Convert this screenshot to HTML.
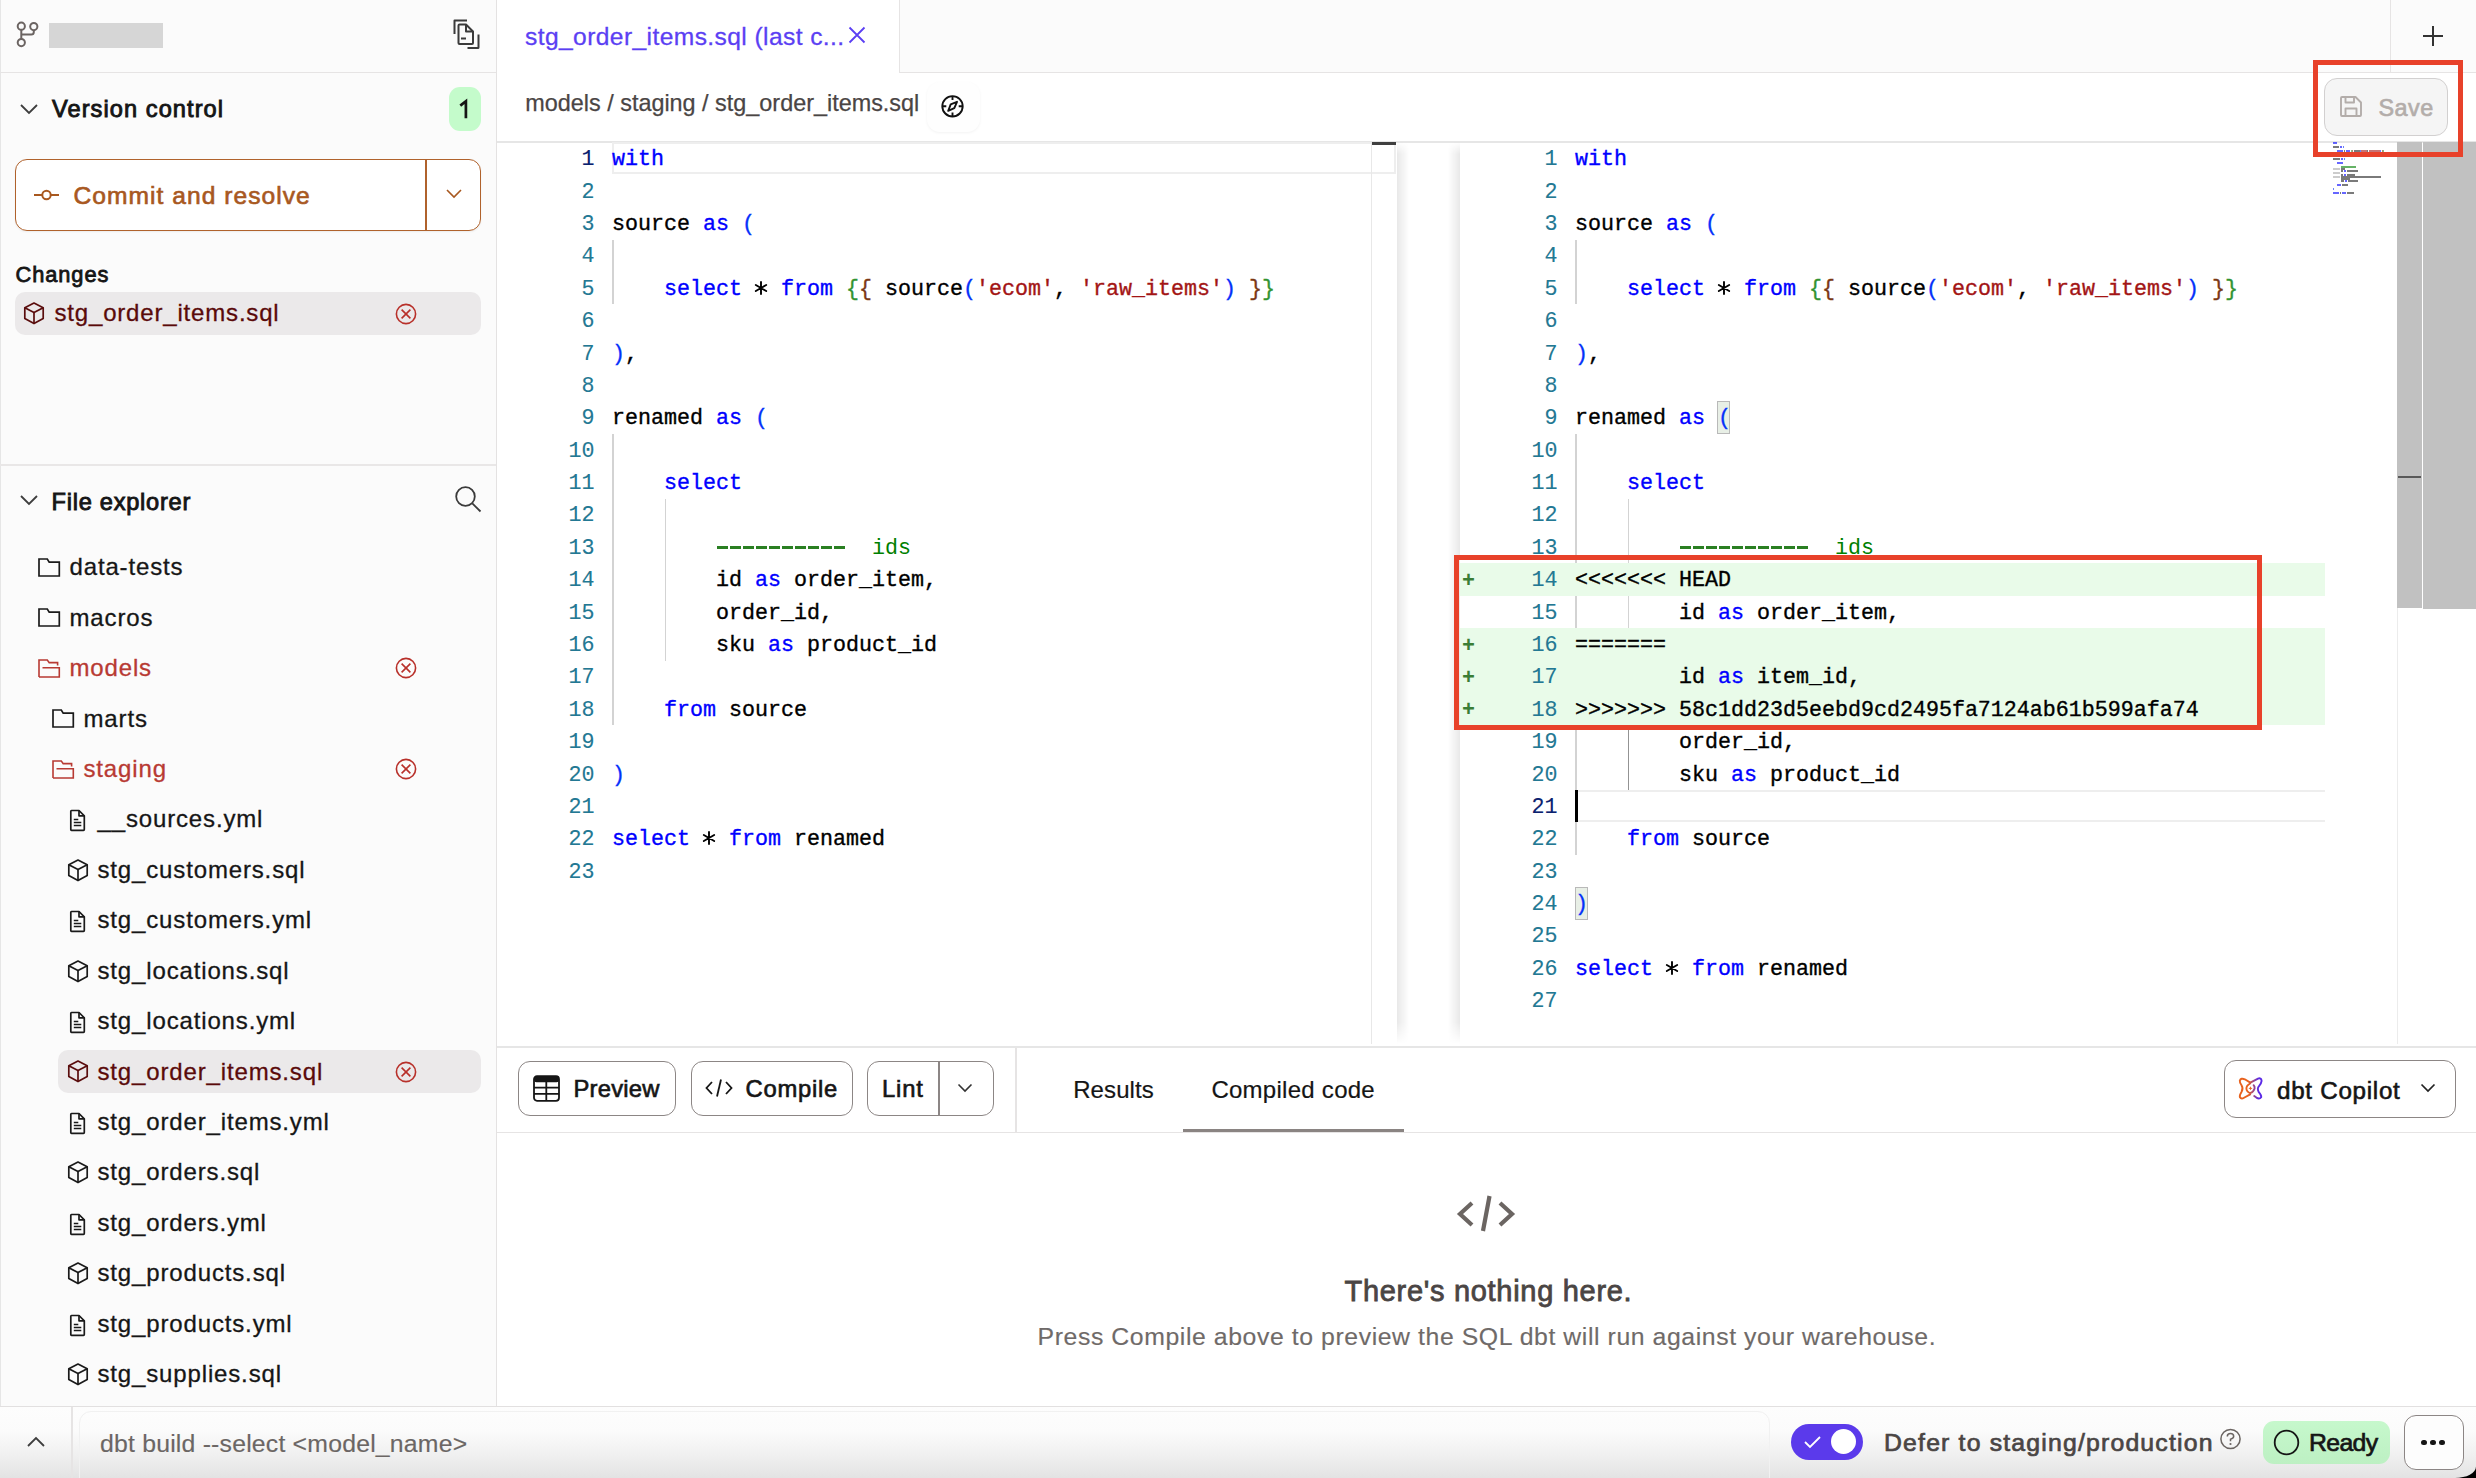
<!DOCTYPE html><html><head><meta charset="utf-8"><style>html,body{margin:0;padding:0;width:2476px;height:1478px;overflow:hidden;background:#fff;position:relative}div{box-sizing:border-box}</style></head><body>
<div style="position:absolute;left:0px;top:0px;width:497px;height:1406px;background:#fbfbfb;border-right:1.5px solid #e4e2e2;border-left:1.5px solid #e6e6e6"></div>
<div style="position:absolute;left:0px;top:71.5px;width:496px;height:1.5px;background:#e6e4e4"></div>
<svg style="position:absolute;left:14px;top:19px;" width="28" height="32" viewBox="0 0 28 32" fill="none"><g stroke="#6b6462" stroke-width="2" fill="none"><circle cx="7.3" cy="7.2" r="3.6"/><circle cx="19.8" cy="7.6" r="3.6"/><circle cx="7.3" cy="23.6" r="3.6"/><path d="M7.3 10.8V20"/><path d="M7.3 15.5H17.3Q19.8 15.5 19.8 13V11.2"/></g></svg>
<div style="position:absolute;left:48.5px;top:22.5px;width:114.5px;height:25.5px;background:#d6d6d6"></div>
<svg style="position:absolute;left:450px;top:16px;" width="34" height="36" viewBox="0 0 34 36" fill="none"><g stroke="#3b3b3b" stroke-width="2" fill="none" stroke-linejoin="round"><path d="M4.5 18V4.5H17"/><path d="M28.5 18.5V31.5Q28.5 32 28 32H17.5"/><path d="M8.5 9.5Q8.5 8.5 9.5 8.5H16L23 15.5V27Q23 28 22 28H9.5Q8.5 28 8.5 27Z"/><path d="M16 8.5V15.5H23"/><path d="M11 22.5H16"/></g></svg>
<svg style="position:absolute;left:19px;top:102px;" width="20" height="16" viewBox="0 0 20 16" fill="none"><path d="M2 3L10 11L18 3" stroke="#3d3d3d" stroke-width="1.8" fill="none"/></svg>
<div style="position:absolute;left:52.00px;top:92.12px;font:400 23.6px 'Liberation Sans', sans-serif;line-height:35px;color:#151515;letter-spacing:1.07px;white-space:pre;-webkit-text-stroke:0.9px #151515">Version control</div>
<div style="position:absolute;left:449px;top:87px;width:32px;height:44px;background:#c4fbcb;border-radius:11px"></div>
<svg style="position:absolute;left:449px;top:87px;" width="32" height="44" viewBox="0 0 32 44" fill="none"><path d="M11.3 18.6L16.9 14.2V31.2" stroke="#151515" stroke-width="2.7" fill="none" stroke-linejoin="miter"/></svg>
<div style="position:absolute;left:15px;top:159px;width:466px;height:72px;background:#fff;border:1.5px solid #b0622c;border-radius:12px;box-shadow:0 1px 2px rgba(0,0,0,0.06)"></div>
<div style="position:absolute;left:425px;top:160px;width:1.5px;height:70px;background:#b0622c"></div>
<svg style="position:absolute;left:32px;top:187px;" width="30" height="16" viewBox="0 0 30 16" fill="none"><g stroke="#a8581f" stroke-width="2" fill="none"><path d="M2 8H10"/><circle cx="14.5" cy="8" r="4.2"/><path d="M19 8H27"/></g></svg>
<div style="position:absolute;left:73.50px;top:176.98px;font:400 24.6px 'Liberation Sans', sans-serif;line-height:37px;color:#a8581f;letter-spacing:1.03px;white-space:pre;-webkit-text-stroke:0.65px #a8581f">Commit and resolve</div>
<svg style="position:absolute;left:444px;top:186px;" width="20" height="16" viewBox="0 0 20 16" fill="none"><path d="M3 4L10 11L17 4" stroke="#a8581f" stroke-width="1.6" fill="none"/></svg>
<div style="position:absolute;left:15.50px;top:257.95px;font:400 21.8px 'Liberation Sans', sans-serif;line-height:33px;color:#151515;letter-spacing:0.93px;white-space:pre;-webkit-text-stroke:0.8px #151515">Changes</div>
<div style="position:absolute;left:15px;top:292px;width:466px;height:43px;background:#ebe9ea;border-radius:10px"></div>
<svg style="position:absolute;left:23px;top:302px;" width="22" height="23" viewBox="0 0 22 23" fill="none"><g stroke="#5a0d0d" stroke-width="1.7" fill="none" stroke-linejoin="round"><path d="M11 1L20.2 5.8V16.6L11 21.6L1.8 16.6V5.8Z"/><path d="M1.8 5.8L11 10.6L20.2 5.8"/><path d="M11 10.6V21.6"/></g></svg>
<div style="position:absolute;left:54.50px;top:295.18px;font:400 24px 'Liberation Sans', sans-serif;line-height:36px;color:#5a0a0a;letter-spacing:0.82px;white-space:pre;-webkit-text-stroke:0.3px #5a0a0a">stg_order_items.sql</div>
<svg style="position:absolute;left:393.5px;top:301.5px;" width="24" height="24" viewBox="0 0 24 24" fill="none"><g stroke="#b8302a" stroke-width="1.6" fill="none"><circle cx="12" cy="12" r="9.6"/><path d="M7.6 7.6L16.4 16.4M16.4 7.6L7.6 16.4"/></g></svg>
<div style="position:absolute;left:0px;top:464px;width:496px;height:2px;background:#e9e7e7"></div>
<svg style="position:absolute;left:19px;top:493px;" width="20" height="16" viewBox="0 0 20 16" fill="none"><path d="M2 3L10 11L18 3" stroke="#3d3d3d" stroke-width="1.8" fill="none"/></svg>
<div style="position:absolute;left:51.50px;top:484.82px;font:400 23.6px 'Liberation Sans', sans-serif;line-height:35px;color:#151515;letter-spacing:0.75px;white-space:pre;-webkit-text-stroke:0.9px #151515">File explorer</div>
<svg style="position:absolute;left:452px;top:483px;" width="32" height="32" viewBox="0 0 32 32" fill="none"><g stroke="#3b3b3b" stroke-width="1.8" fill="none"><circle cx="13.5" cy="13.5" r="9.3"/><path d="M20.3 20.3L28.5 28.5"/></g></svg>
<svg style="position:absolute;left:38px;top:558.0px;" width="23" height="20" viewBox="0 0 23 20" fill="none"><g stroke="#1a1a1a" stroke-width="1.7" fill="none" stroke-linejoin="miter"><path d="M1 1H9.3L11.2 4.1H21.3V18H1Z"/></g></svg>
<div style="position:absolute;left:69.50px;top:549.18px;font:400 24px 'Liberation Sans', sans-serif;line-height:36px;color:#161616;letter-spacing:0.85px;white-space:pre;-webkit-text-stroke:0.3px #161616">data-tests</div>
<svg style="position:absolute;left:38px;top:608.44px;" width="23" height="20" viewBox="0 0 23 20" fill="none"><g stroke="#1a1a1a" stroke-width="1.7" fill="none" stroke-linejoin="miter"><path d="M1 1H9.3L11.2 4.1H21.3V18H1Z"/></g></svg>
<div style="position:absolute;left:69.50px;top:599.62px;font:400 24px 'Liberation Sans', sans-serif;line-height:36px;color:#161616;letter-spacing:0.85px;white-space:pre;-webkit-text-stroke:0.3px #161616">macros</div>
<svg style="position:absolute;left:38px;top:658.88px;" width="23" height="20" viewBox="0 0 23 20" fill="none"><g stroke="#b83a33" stroke-width="1.6" fill="none" stroke-linejoin="miter"><path d="M1 18V1H9.3L11.2 3.6H19.6V6.5"/><path d="M4.5 8.8H21.3V18H1"/></g></svg>
<div style="position:absolute;left:69.50px;top:650.06px;font:400 24px 'Liberation Sans', sans-serif;line-height:36px;color:#b83a33;letter-spacing:0.85px;white-space:pre;-webkit-text-stroke:0.3px #b83a33">models</div>
<svg style="position:absolute;left:393.5px;top:656.38px;" width="24" height="24" viewBox="0 0 24 24" fill="none"><g stroke="#b8302a" stroke-width="1.6" fill="none"><circle cx="12" cy="12" r="9.6"/><path d="M7.6 7.6L16.4 16.4M16.4 7.6L7.6 16.4"/></g></svg>
<svg style="position:absolute;left:52px;top:709.3199999999999px;" width="23" height="20" viewBox="0 0 23 20" fill="none"><g stroke="#1a1a1a" stroke-width="1.7" fill="none" stroke-linejoin="miter"><path d="M1 1H9.3L11.2 4.1H21.3V18H1Z"/></g></svg>
<div style="position:absolute;left:83.50px;top:700.50px;font:400 24px 'Liberation Sans', sans-serif;line-height:36px;color:#161616;letter-spacing:0.85px;white-space:pre;-webkit-text-stroke:0.3px #161616">marts</div>
<svg style="position:absolute;left:52px;top:759.76px;" width="23" height="20" viewBox="0 0 23 20" fill="none"><g stroke="#b83a33" stroke-width="1.6" fill="none" stroke-linejoin="miter"><path d="M1 18V1H9.3L11.2 3.6H19.6V6.5"/><path d="M4.5 8.8H21.3V18H1"/></g></svg>
<div style="position:absolute;left:83.50px;top:750.94px;font:400 24px 'Liberation Sans', sans-serif;line-height:36px;color:#b83a33;letter-spacing:0.85px;white-space:pre;-webkit-text-stroke:0.3px #b83a33">staging</div>
<svg style="position:absolute;left:393.5px;top:757.26px;" width="24" height="24" viewBox="0 0 24 24" fill="none"><g stroke="#b8302a" stroke-width="1.6" fill="none"><circle cx="12" cy="12" r="9.6"/><path d="M7.6 7.6L16.4 16.4M16.4 7.6L7.6 16.4"/></g></svg>
<svg style="position:absolute;left:69px;top:809.2px;" width="17" height="23" viewBox="0 0 17 23" fill="none"><g stroke="#1a1a1a" stroke-width="1.7" fill="none" stroke-linejoin="round"><path d="M1.8 2.2Q1.8 1.5 2.5 1.5H10L15.3 6.8V20.5Q15.3 21.3 14.5 21.3H2.5Q1.8 21.3 1.8 20.5Z"/><path d="M10 1.5V6.8H15.3"/><path d="M4.8 10.5H9.3M4.8 13.5H12.3M4.8 16.5H12.3"/></g></svg>
<div style="position:absolute;left:97.50px;top:801.38px;font:400 24px 'Liberation Sans', sans-serif;line-height:36px;color:#161616;letter-spacing:0.85px;white-space:pre;-webkit-text-stroke:0.3px #161616">__sources.yml</div>
<svg style="position:absolute;left:66.5px;top:858.64px;" width="22" height="23" viewBox="0 0 22 23" fill="none"><g stroke="#1a1a1a" stroke-width="1.7" fill="none" stroke-linejoin="round"><path d="M11 1L20.2 5.8V16.6L11 21.6L1.8 16.6V5.8Z"/><path d="M1.8 5.8L11 10.6L20.2 5.8"/><path d="M11 10.6V21.6"/></g></svg>
<div style="position:absolute;left:97.50px;top:851.82px;font:400 24px 'Liberation Sans', sans-serif;line-height:36px;color:#161616;letter-spacing:0.85px;white-space:pre;-webkit-text-stroke:0.3px #161616">stg_customers.sql</div>
<svg style="position:absolute;left:69px;top:910.0799999999999px;" width="17" height="23" viewBox="0 0 17 23" fill="none"><g stroke="#1a1a1a" stroke-width="1.7" fill="none" stroke-linejoin="round"><path d="M1.8 2.2Q1.8 1.5 2.5 1.5H10L15.3 6.8V20.5Q15.3 21.3 14.5 21.3H2.5Q1.8 21.3 1.8 20.5Z"/><path d="M10 1.5V6.8H15.3"/><path d="M4.8 10.5H9.3M4.8 13.5H12.3M4.8 16.5H12.3"/></g></svg>
<div style="position:absolute;left:97.50px;top:902.26px;font:400 24px 'Liberation Sans', sans-serif;line-height:36px;color:#161616;letter-spacing:0.85px;white-space:pre;-webkit-text-stroke:0.3px #161616">stg_customers.yml</div>
<svg style="position:absolute;left:66.5px;top:959.52px;" width="22" height="23" viewBox="0 0 22 23" fill="none"><g stroke="#1a1a1a" stroke-width="1.7" fill="none" stroke-linejoin="round"><path d="M11 1L20.2 5.8V16.6L11 21.6L1.8 16.6V5.8Z"/><path d="M1.8 5.8L11 10.6L20.2 5.8"/><path d="M11 10.6V21.6"/></g></svg>
<div style="position:absolute;left:97.50px;top:952.70px;font:400 24px 'Liberation Sans', sans-serif;line-height:36px;color:#161616;letter-spacing:0.85px;white-space:pre;-webkit-text-stroke:0.3px #161616">stg_locations.sql</div>
<svg style="position:absolute;left:69px;top:1010.96px;" width="17" height="23" viewBox="0 0 17 23" fill="none"><g stroke="#1a1a1a" stroke-width="1.7" fill="none" stroke-linejoin="round"><path d="M1.8 2.2Q1.8 1.5 2.5 1.5H10L15.3 6.8V20.5Q15.3 21.3 14.5 21.3H2.5Q1.8 21.3 1.8 20.5Z"/><path d="M10 1.5V6.8H15.3"/><path d="M4.8 10.5H9.3M4.8 13.5H12.3M4.8 16.5H12.3"/></g></svg>
<div style="position:absolute;left:97.50px;top:1003.14px;font:400 24px 'Liberation Sans', sans-serif;line-height:36px;color:#161616;letter-spacing:0.85px;white-space:pre;-webkit-text-stroke:0.3px #161616">stg_locations.yml</div>
<div style="position:absolute;left:58px;top:1050.4px;width:423px;height:42.5px;background:#ebe9ea;border-radius:10px"></div>
<svg style="position:absolute;left:66.5px;top:1060.4px;" width="22" height="23" viewBox="0 0 22 23" fill="none"><g stroke="#5a0d0d" stroke-width="1.7" fill="none" stroke-linejoin="round"><path d="M11 1L20.2 5.8V16.6L11 21.6L1.8 16.6V5.8Z"/><path d="M1.8 5.8L11 10.6L20.2 5.8"/><path d="M11 10.6V21.6"/></g></svg>
<div style="position:absolute;left:97.50px;top:1053.58px;font:400 24px 'Liberation Sans', sans-serif;line-height:36px;color:#5a0a0a;letter-spacing:0.85px;white-space:pre;-webkit-text-stroke:0.3px #5a0a0a">stg_order_items.sql</div>
<svg style="position:absolute;left:393.5px;top:1059.9px;" width="24" height="24" viewBox="0 0 24 24" fill="none"><g stroke="#b8302a" stroke-width="1.6" fill="none"><circle cx="12" cy="12" r="9.6"/><path d="M7.6 7.6L16.4 16.4M16.4 7.6L7.6 16.4"/></g></svg>
<svg style="position:absolute;left:69px;top:1111.84px;" width="17" height="23" viewBox="0 0 17 23" fill="none"><g stroke="#1a1a1a" stroke-width="1.7" fill="none" stroke-linejoin="round"><path d="M1.8 2.2Q1.8 1.5 2.5 1.5H10L15.3 6.8V20.5Q15.3 21.3 14.5 21.3H2.5Q1.8 21.3 1.8 20.5Z"/><path d="M10 1.5V6.8H15.3"/><path d="M4.8 10.5H9.3M4.8 13.5H12.3M4.8 16.5H12.3"/></g></svg>
<div style="position:absolute;left:97.50px;top:1104.02px;font:400 24px 'Liberation Sans', sans-serif;line-height:36px;color:#161616;letter-spacing:0.85px;white-space:pre;-webkit-text-stroke:0.3px #161616">stg_order_items.yml</div>
<svg style="position:absolute;left:66.5px;top:1161.28px;" width="22" height="23" viewBox="0 0 22 23" fill="none"><g stroke="#1a1a1a" stroke-width="1.7" fill="none" stroke-linejoin="round"><path d="M11 1L20.2 5.8V16.6L11 21.6L1.8 16.6V5.8Z"/><path d="M1.8 5.8L11 10.6L20.2 5.8"/><path d="M11 10.6V21.6"/></g></svg>
<div style="position:absolute;left:97.50px;top:1154.46px;font:400 24px 'Liberation Sans', sans-serif;line-height:36px;color:#161616;letter-spacing:0.85px;white-space:pre;-webkit-text-stroke:0.3px #161616">stg_orders.sql</div>
<svg style="position:absolute;left:69px;top:1212.72px;" width="17" height="23" viewBox="0 0 17 23" fill="none"><g stroke="#1a1a1a" stroke-width="1.7" fill="none" stroke-linejoin="round"><path d="M1.8 2.2Q1.8 1.5 2.5 1.5H10L15.3 6.8V20.5Q15.3 21.3 14.5 21.3H2.5Q1.8 21.3 1.8 20.5Z"/><path d="M10 1.5V6.8H15.3"/><path d="M4.8 10.5H9.3M4.8 13.5H12.3M4.8 16.5H12.3"/></g></svg>
<div style="position:absolute;left:97.50px;top:1204.90px;font:400 24px 'Liberation Sans', sans-serif;line-height:36px;color:#161616;letter-spacing:0.85px;white-space:pre;-webkit-text-stroke:0.3px #161616">stg_orders.yml</div>
<svg style="position:absolute;left:66.5px;top:1262.1599999999999px;" width="22" height="23" viewBox="0 0 22 23" fill="none"><g stroke="#1a1a1a" stroke-width="1.7" fill="none" stroke-linejoin="round"><path d="M11 1L20.2 5.8V16.6L11 21.6L1.8 16.6V5.8Z"/><path d="M1.8 5.8L11 10.6L20.2 5.8"/><path d="M11 10.6V21.6"/></g></svg>
<div style="position:absolute;left:97.50px;top:1255.34px;font:400 24px 'Liberation Sans', sans-serif;line-height:36px;color:#161616;letter-spacing:0.85px;white-space:pre;-webkit-text-stroke:0.3px #161616">stg_products.sql</div>
<svg style="position:absolute;left:69px;top:1313.6px;" width="17" height="23" viewBox="0 0 17 23" fill="none"><g stroke="#1a1a1a" stroke-width="1.7" fill="none" stroke-linejoin="round"><path d="M1.8 2.2Q1.8 1.5 2.5 1.5H10L15.3 6.8V20.5Q15.3 21.3 14.5 21.3H2.5Q1.8 21.3 1.8 20.5Z"/><path d="M10 1.5V6.8H15.3"/><path d="M4.8 10.5H9.3M4.8 13.5H12.3M4.8 16.5H12.3"/></g></svg>
<div style="position:absolute;left:97.50px;top:1305.78px;font:400 24px 'Liberation Sans', sans-serif;line-height:36px;color:#161616;letter-spacing:0.85px;white-space:pre;-webkit-text-stroke:0.3px #161616">stg_products.yml</div>
<svg style="position:absolute;left:66.5px;top:1363.04px;" width="22" height="23" viewBox="0 0 22 23" fill="none"><g stroke="#1a1a1a" stroke-width="1.7" fill="none" stroke-linejoin="round"><path d="M11 1L20.2 5.8V16.6L11 21.6L1.8 16.6V5.8Z"/><path d="M1.8 5.8L11 10.6L20.2 5.8"/><path d="M11 10.6V21.6"/></g></svg>
<div style="position:absolute;left:97.50px;top:1356.22px;font:400 24px 'Liberation Sans', sans-serif;line-height:36px;color:#161616;letter-spacing:0.85px;white-space:pre;-webkit-text-stroke:0.3px #161616">stg_supplies.sql</div>
<div style="position:absolute;left:497px;top:0px;width:1979px;height:73px;background:#fbfbfb;border-bottom:1.5px solid #e6e4e4"></div>
<div style="position:absolute;left:497px;top:0px;width:403px;height:71.5px;background:#fff;border-right:1.5px solid #e6e4e4"></div>
<div style="position:absolute;left:497px;top:71.5px;width:401.5px;height:1.5px;background:#fff"></div>
<div style="position:absolute;left:525.00px;top:17.78px;font:400 24.6px 'Liberation Sans', sans-serif;line-height:37px;color:#5b3ff3;letter-spacing:0.4px;white-space:pre;-webkit-text-stroke:0.3px #5b3ff3">stg_order_items.sql (last c...</div>
<svg style="position:absolute;left:846px;top:24px;" width="22" height="22" viewBox="0 0 22 22" fill="none"><path d="M3.5 3.5L18.5 18.5M18.5 3.5L3.5 18.5" stroke="#5b3ff3" stroke-width="1.8"/></svg>
<div style="position:absolute;left:2389.5px;top:0px;width:1.5px;height:72px;background:#e6e4e4"></div>
<svg style="position:absolute;left:2421px;top:24px;" width="24" height="24" viewBox="0 0 24 24" fill="none"><path d="M12 2V22M2 12H22" stroke="#333" stroke-width="2"/></svg>
<div style="position:absolute;left:525.30px;top:85.89px;font:400 23.4px 'Liberation Sans', sans-serif;line-height:35px;color:#4a4544;letter-spacing:0px;white-space:pre;-webkit-text-stroke:0.25px #4a4544">models / staging / stg_order_items.sql</div>
<div style="position:absolute;left:927px;top:82px;width:53px;height:50px;border-radius:13px;box-shadow:0 1px 3px rgba(0,0,0,0.05);background:#fefefe"></div>
<svg style="position:absolute;left:940px;top:94px;" width="26" height="26" viewBox="0 0 26 26" fill="none"><g stroke="#111" stroke-width="1.9" fill="none"><circle cx="12.5" cy="12.3" r="10.2"/><path d="M12.5 2V6M12.5 18.6V22.6M2.3 12.3H6.3M18.7 12.3H22.7"/><path d="M17 7.8L14.3 14.2L8.2 16.8L10.7 10.3Z" stroke-linejoin="round"/></g></svg>
<div style="position:absolute;left:2324px;top:78px;width:124px;height:58px;background:#f5f5f5;border:1.5px solid #d2d0d0;border-radius:13px"></div>
<svg style="position:absolute;left:2338px;top:94px;" width="26" height="26" viewBox="0 0 26 26" fill="none"><g stroke="#b3adaa" stroke-width="1.9" fill="none" stroke-linejoin="round"><path d="M3 4Q3 3 4 3H17.5L23 8.5V21Q23 22 22 22H4Q3 22 3 21Z"/><path d="M7.5 3V8.5H16V3"/><path d="M7.5 22V14.5H18.5V22"/></g></svg>
<div style="position:absolute;left:2378.50px;top:91.39px;font:400 23.4px 'Liberation Sans', sans-serif;line-height:35px;color:#b3adaa;letter-spacing:0.5px;white-space:pre;-webkit-text-stroke:0.65px #b3adaa">Save</div>
<div style="position:absolute;left:497px;top:141px;width:1979px;height:1.5px;background:#e6e6e6"></div>
<div style="position:absolute;left:611.5px;top:142px;width:784.5px;height:32.4px;border:2.6px solid #eeeeee"></div>
<div style="position:absolute;left:1371px;top:142px;width:1.2px;height:902px;background:#e8e8e8"></div>
<div style="position:absolute;left:1372px;top:142px;width:24px;height:3px;background:#3f3f3f"></div>
<div style="position:absolute;left:612.3px;top:239.64000000000001px;width:1.3px;height:64.76px;background:#d3d3d3"></div>
<div style="position:absolute;left:612.3px;top:433.92px;width:1.3px;height:291.42px;background:#d3d3d3"></div>
<div style="position:absolute;left:664.8px;top:498.68px;width:1.3px;height:161.9px;background:#d3d3d3"></div>
<div style="position:absolute;left:514.5px;top:144.30px;width:80px;text-align:right;font:400 21.667px 'Liberation Mono', monospace;line-height:32.38px;color:#0b216f;white-space:pre;-webkit-text-stroke:0.1px #0b216f">1</div>
<div style="position:absolute;left:612px;top:144.30px;font:400 21.667px 'Liberation Mono', monospace;line-height:32.38px;white-space:pre"><span style="color:#0000ff;-webkit-text-stroke:0.35px #0000ff">with</span></div>
<div style="position:absolute;left:514.5px;top:176.68px;width:80px;text-align:right;font:400 21.667px 'Liberation Mono', monospace;line-height:32.38px;color:#237893;white-space:pre;-webkit-text-stroke:0.1px #237893">2</div>
<div style="position:absolute;left:514.5px;top:209.06px;width:80px;text-align:right;font:400 21.667px 'Liberation Mono', monospace;line-height:32.38px;color:#237893;white-space:pre;-webkit-text-stroke:0.1px #237893">3</div>
<div style="position:absolute;left:612px;top:209.06px;font:400 21.667px 'Liberation Mono', monospace;line-height:32.38px;white-space:pre"><span style="color:#000;-webkit-text-stroke:0.35px #000">source</span><span style="color:#000;-webkit-text-stroke:0.35px #000"> </span><span style="color:#0000ff;-webkit-text-stroke:0.35px #0000ff">as</span><span style="color:#000;-webkit-text-stroke:0.35px #000"> </span><span style="color:#0431fa;-webkit-text-stroke:0.35px #0431fa">(</span></div>
<div style="position:absolute;left:514.5px;top:241.44px;width:80px;text-align:right;font:400 21.667px 'Liberation Mono', monospace;line-height:32.38px;color:#237893;white-space:pre;-webkit-text-stroke:0.1px #237893">4</div>
<div style="position:absolute;left:514.5px;top:273.82px;width:80px;text-align:right;font:400 21.667px 'Liberation Mono', monospace;line-height:32.38px;color:#237893;white-space:pre;-webkit-text-stroke:0.1px #237893">5</div>
<svg style="position:absolute;left:753.4px;top:280.02px;" width="16" height="16" viewBox="0 0 16 16" fill="none"><g stroke="#000" stroke-width="1.9" stroke-linecap="round"><path d="M8 2V14M2.8 5L13.2 11M13.2 5L2.8 11"/></g></svg>
<div style="position:absolute;left:612px;top:273.82px;font:400 21.667px 'Liberation Mono', monospace;line-height:32.38px;white-space:pre"><span style="color:#000;-webkit-text-stroke:0.35px #000">    </span><span style="color:#0000ff;-webkit-text-stroke:0.35px #0000ff">select</span><span style="color:#000;-webkit-text-stroke:0.35px #000"> </span><span style="color:#000;-webkit-text-stroke:0.35px #000"> </span><span style="color:#000;-webkit-text-stroke:0.35px #000"> </span><span style="color:#0000ff;-webkit-text-stroke:0.35px #0000ff">from</span><span style="color:#000;-webkit-text-stroke:0.35px #000"> </span><span style="color:#319331;-webkit-text-stroke:0.35px #319331">{</span><span style="color:#7b3814;-webkit-text-stroke:0.35px #7b3814">{</span><span style="color:#000;-webkit-text-stroke:0.35px #000"> </span><span style="color:#000;-webkit-text-stroke:0.35px #000">source</span><span style="color:#0431fa;-webkit-text-stroke:0.35px #0431fa">(</span><span style="color:#a31515;-webkit-text-stroke:0.35px #a31515">&#x27;ecom&#x27;</span><span style="color:#000;-webkit-text-stroke:0.35px #000">,</span><span style="color:#000;-webkit-text-stroke:0.35px #000"> </span><span style="color:#a31515;-webkit-text-stroke:0.35px #a31515">&#x27;raw_items&#x27;</span><span style="color:#0431fa;-webkit-text-stroke:0.35px #0431fa">)</span><span style="color:#000;-webkit-text-stroke:0.35px #000"> </span><span style="color:#7b3814;-webkit-text-stroke:0.35px #7b3814">}</span><span style="color:#319331;-webkit-text-stroke:0.35px #319331">}</span></div>
<div style="position:absolute;left:514.5px;top:306.20px;width:80px;text-align:right;font:400 21.667px 'Liberation Mono', monospace;line-height:32.38px;color:#237893;white-space:pre;-webkit-text-stroke:0.1px #237893">6</div>
<div style="position:absolute;left:514.5px;top:338.58px;width:80px;text-align:right;font:400 21.667px 'Liberation Mono', monospace;line-height:32.38px;color:#237893;white-space:pre;-webkit-text-stroke:0.1px #237893">7</div>
<div style="position:absolute;left:612px;top:338.58px;font:400 21.667px 'Liberation Mono', monospace;line-height:32.38px;white-space:pre"><span style="color:#0431fa;-webkit-text-stroke:0.35px #0431fa">)</span><span style="color:#000;-webkit-text-stroke:0.35px #000">,</span></div>
<div style="position:absolute;left:514.5px;top:370.96px;width:80px;text-align:right;font:400 21.667px 'Liberation Mono', monospace;line-height:32.38px;color:#237893;white-space:pre;-webkit-text-stroke:0.1px #237893">8</div>
<div style="position:absolute;left:514.5px;top:403.34px;width:80px;text-align:right;font:400 21.667px 'Liberation Mono', monospace;line-height:32.38px;color:#237893;white-space:pre;-webkit-text-stroke:0.1px #237893">9</div>
<div style="position:absolute;left:612px;top:403.34px;font:400 21.667px 'Liberation Mono', monospace;line-height:32.38px;white-space:pre"><span style="color:#000;-webkit-text-stroke:0.35px #000">renamed</span><span style="color:#000;-webkit-text-stroke:0.35px #000"> </span><span style="color:#0000ff;-webkit-text-stroke:0.35px #0000ff">as</span><span style="color:#000;-webkit-text-stroke:0.35px #000"> </span><span style="color:#0431fa;-webkit-text-stroke:0.35px #0431fa">(</span></div>
<div style="position:absolute;left:514.5px;top:435.72px;width:80px;text-align:right;font:400 21.667px 'Liberation Mono', monospace;line-height:32.38px;color:#237893;white-space:pre;-webkit-text-stroke:0.1px #237893">10</div>
<div style="position:absolute;left:514.5px;top:468.10px;width:80px;text-align:right;font:400 21.667px 'Liberation Mono', monospace;line-height:32.38px;color:#237893;white-space:pre;-webkit-text-stroke:0.1px #237893">11</div>
<div style="position:absolute;left:612px;top:468.10px;font:400 21.667px 'Liberation Mono', monospace;line-height:32.38px;white-space:pre"><span style="color:#000;-webkit-text-stroke:0.35px #000">    </span><span style="color:#0000ff;-webkit-text-stroke:0.35px #0000ff">select</span></div>
<div style="position:absolute;left:514.5px;top:500.48px;width:80px;text-align:right;font:400 21.667px 'Liberation Mono', monospace;line-height:32.38px;color:#237893;white-space:pre;-webkit-text-stroke:0.1px #237893">12</div>
<div style="position:absolute;left:514.5px;top:532.86px;width:80px;text-align:right;font:400 21.667px 'Liberation Mono', monospace;line-height:32.38px;color:#237893;white-space:pre;-webkit-text-stroke:0.1px #237893">13</div>
<div style="position:absolute;left:717.2px;top:546.2600000000001px;width:10.8px;height:2.3px;background:#2a7f22"></div>
<div style="position:absolute;left:730.2px;top:546.2600000000001px;width:10.8px;height:2.3px;background:#2a7f22"></div>
<div style="position:absolute;left:743.2px;top:546.2600000000001px;width:10.8px;height:2.3px;background:#2a7f22"></div>
<div style="position:absolute;left:756.2px;top:546.2600000000001px;width:10.8px;height:2.3px;background:#2a7f22"></div>
<div style="position:absolute;left:769.2px;top:546.2600000000001px;width:10.8px;height:2.3px;background:#2a7f22"></div>
<div style="position:absolute;left:782.2px;top:546.2600000000001px;width:10.8px;height:2.3px;background:#2a7f22"></div>
<div style="position:absolute;left:795.2px;top:546.2600000000001px;width:10.8px;height:2.3px;background:#2a7f22"></div>
<div style="position:absolute;left:808.2px;top:546.2600000000001px;width:10.8px;height:2.3px;background:#2a7f22"></div>
<div style="position:absolute;left:821.2px;top:546.2600000000001px;width:10.8px;height:2.3px;background:#2a7f22"></div>
<div style="position:absolute;left:834.2px;top:546.2600000000001px;width:10.8px;height:2.3px;background:#2a7f22"></div>
<div style="position:absolute;left:612px;top:532.86px;font:400 21.667px 'Liberation Mono', monospace;line-height:32.38px;white-space:pre"><span style="color:#000;-webkit-text-stroke:0.35px #000">        </span><span style="color:#008000">            ids</span></div>
<div style="position:absolute;left:514.5px;top:565.24px;width:80px;text-align:right;font:400 21.667px 'Liberation Mono', monospace;line-height:32.38px;color:#237893;white-space:pre;-webkit-text-stroke:0.1px #237893">14</div>
<div style="position:absolute;left:612px;top:565.24px;font:400 21.667px 'Liberation Mono', monospace;line-height:32.38px;white-space:pre"><span style="color:#000;-webkit-text-stroke:0.35px #000">        </span><span style="color:#000;-webkit-text-stroke:0.35px #000">id</span><span style="color:#000;-webkit-text-stroke:0.35px #000"> </span><span style="color:#0000ff;-webkit-text-stroke:0.35px #0000ff">as</span><span style="color:#000;-webkit-text-stroke:0.35px #000"> </span><span style="color:#000;-webkit-text-stroke:0.35px #000">order_item</span><span style="color:#000;-webkit-text-stroke:0.35px #000">,</span></div>
<div style="position:absolute;left:514.5px;top:597.62px;width:80px;text-align:right;font:400 21.667px 'Liberation Mono', monospace;line-height:32.38px;color:#237893;white-space:pre;-webkit-text-stroke:0.1px #237893">15</div>
<div style="position:absolute;left:612px;top:597.62px;font:400 21.667px 'Liberation Mono', monospace;line-height:32.38px;white-space:pre"><span style="color:#000;-webkit-text-stroke:0.35px #000">        </span><span style="color:#000;-webkit-text-stroke:0.35px #000">order_id</span><span style="color:#000;-webkit-text-stroke:0.35px #000">,</span></div>
<div style="position:absolute;left:514.5px;top:630.00px;width:80px;text-align:right;font:400 21.667px 'Liberation Mono', monospace;line-height:32.38px;color:#237893;white-space:pre;-webkit-text-stroke:0.1px #237893">16</div>
<div style="position:absolute;left:612px;top:630.00px;font:400 21.667px 'Liberation Mono', monospace;line-height:32.38px;white-space:pre"><span style="color:#000;-webkit-text-stroke:0.35px #000">        </span><span style="color:#000;-webkit-text-stroke:0.35px #000">sku</span><span style="color:#000;-webkit-text-stroke:0.35px #000"> </span><span style="color:#0000ff;-webkit-text-stroke:0.35px #0000ff">as</span><span style="color:#000;-webkit-text-stroke:0.35px #000"> </span><span style="color:#000;-webkit-text-stroke:0.35px #000">product_id</span></div>
<div style="position:absolute;left:514.5px;top:662.38px;width:80px;text-align:right;font:400 21.667px 'Liberation Mono', monospace;line-height:32.38px;color:#237893;white-space:pre;-webkit-text-stroke:0.1px #237893">17</div>
<div style="position:absolute;left:514.5px;top:694.76px;width:80px;text-align:right;font:400 21.667px 'Liberation Mono', monospace;line-height:32.38px;color:#237893;white-space:pre;-webkit-text-stroke:0.1px #237893">18</div>
<div style="position:absolute;left:612px;top:694.76px;font:400 21.667px 'Liberation Mono', monospace;line-height:32.38px;white-space:pre"><span style="color:#000;-webkit-text-stroke:0.35px #000">    </span><span style="color:#0000ff;-webkit-text-stroke:0.35px #0000ff">from</span><span style="color:#000;-webkit-text-stroke:0.35px #000"> </span><span style="color:#000;-webkit-text-stroke:0.35px #000">source</span></div>
<div style="position:absolute;left:514.5px;top:727.14px;width:80px;text-align:right;font:400 21.667px 'Liberation Mono', monospace;line-height:32.38px;color:#237893;white-space:pre;-webkit-text-stroke:0.1px #237893">19</div>
<div style="position:absolute;left:514.5px;top:759.52px;width:80px;text-align:right;font:400 21.667px 'Liberation Mono', monospace;line-height:32.38px;color:#237893;white-space:pre;-webkit-text-stroke:0.1px #237893">20</div>
<div style="position:absolute;left:612px;top:759.52px;font:400 21.667px 'Liberation Mono', monospace;line-height:32.38px;white-space:pre"><span style="color:#0431fa;-webkit-text-stroke:0.35px #0431fa">)</span></div>
<div style="position:absolute;left:514.5px;top:791.90px;width:80px;text-align:right;font:400 21.667px 'Liberation Mono', monospace;line-height:32.38px;color:#237893;white-space:pre;-webkit-text-stroke:0.1px #237893">21</div>
<div style="position:absolute;left:514.5px;top:824.28px;width:80px;text-align:right;font:400 21.667px 'Liberation Mono', monospace;line-height:32.38px;color:#237893;white-space:pre;-webkit-text-stroke:0.1px #237893">22</div>
<svg style="position:absolute;left:701.4px;top:830.48px;" width="16" height="16" viewBox="0 0 16 16" fill="none"><g stroke="#000" stroke-width="1.9" stroke-linecap="round"><path d="M8 2V14M2.8 5L13.2 11M13.2 5L2.8 11"/></g></svg>
<div style="position:absolute;left:612px;top:824.28px;font:400 21.667px 'Liberation Mono', monospace;line-height:32.38px;white-space:pre"><span style="color:#0000ff;-webkit-text-stroke:0.35px #0000ff">select</span><span style="color:#000;-webkit-text-stroke:0.35px #000"> </span><span style="color:#000;-webkit-text-stroke:0.35px #000"> </span><span style="color:#000;-webkit-text-stroke:0.35px #000"> </span><span style="color:#0000ff;-webkit-text-stroke:0.35px #0000ff">from</span><span style="color:#000;-webkit-text-stroke:0.35px #000"> </span><span style="color:#000;-webkit-text-stroke:0.35px #000">renamed</span></div>
<div style="position:absolute;left:514.5px;top:856.66px;width:80px;text-align:right;font:400 21.667px 'Liberation Mono', monospace;line-height:32.38px;color:#237893;white-space:pre;-webkit-text-stroke:0.1px #237893">23</div>
<div style="position:absolute;left:1397px;top:142px;width:12px;height:902px;background:linear-gradient(to right, rgba(0,0,0,0.09), rgba(0,0,0,0));-webkit-mask-image:linear-gradient(to bottom, transparent 0px, #000 12px, #000 880px, transparent 902px)"></div>
<div style="position:absolute;left:1448px;top:142px;width:12px;height:902px;background:linear-gradient(to left, rgba(0,0,0,0.09), rgba(0,0,0,0));-webkit-mask-image:linear-gradient(to bottom, transparent 0px, #000 12px, #000 880px, transparent 902px)"></div>
<div style="position:absolute;left:1460px;top:563.44px;width:865px;height:32.38px;background:#e9fbe9"></div>
<div style="position:absolute;left:1462px;top:565.84px;font:700 21.667px 'Liberation Mono', monospace;line-height:32.38px;color:#3a7d35">+</div>
<div style="position:absolute;left:1460px;top:628.2px;width:865px;height:32.38px;background:#e9fbe9"></div>
<div style="position:absolute;left:1462px;top:630.60px;font:700 21.667px 'Liberation Mono', monospace;line-height:32.38px;color:#3a7d35">+</div>
<div style="position:absolute;left:1460px;top:660.58px;width:865px;height:32.38px;background:#e9fbe9"></div>
<div style="position:absolute;left:1462px;top:662.98px;font:700 21.667px 'Liberation Mono', monospace;line-height:32.38px;color:#3a7d35">+</div>
<div style="position:absolute;left:1460px;top:692.96px;width:865px;height:32.38px;background:#e9fbe9"></div>
<div style="position:absolute;left:1462px;top:695.36px;font:700 21.667px 'Liberation Mono', monospace;line-height:32.38px;color:#3a7d35">+</div>
<div style="position:absolute;left:1575px;top:790.1px;width:750px;height:32.4px;border:2.6px solid #eeeeee;border-left:none;border-right:none"></div>
<div style="position:absolute;left:1575.3px;top:239.64000000000001px;width:1.3px;height:64.76px;background:#d3d3d3"></div>
<div style="position:absolute;left:1575.3px;top:433.92px;width:1.3px;height:129.52px;background:#d3d3d3"></div>
<div style="position:absolute;left:1575.3px;top:595.82px;width:1.3px;height:32.38px;background:#d3d3d3"></div>
<div style="position:absolute;left:1575.3px;top:725.34px;width:1.3px;height:64.76px;background:#d3d3d3"></div>
<div style="position:absolute;left:1575.3px;top:822.48px;width:1.3px;height:32.38px;background:#d3d3d3"></div>
<div style="position:absolute;left:1627.8px;top:498.68px;width:1.3px;height:64.76px;background:#d3d3d3"></div>
<div style="position:absolute;left:1627.8px;top:595.82px;width:1.3px;height:32.38px;background:#d3d3d3"></div>
<div style="position:absolute;left:1627.8px;top:725.34px;width:1.3px;height:64.76px;background:#939393"></div>
<div style="position:absolute;left:1717px;top:401.04px;width:13px;height:33px;background:#e8efe6;border:1px solid #b9b9b9"></div>
<div style="position:absolute;left:1575px;top:886.74px;width:13px;height:33px;background:#e8efe6;border:1px solid #b9b9b9"></div>
<div style="position:absolute;left:1477.5px;top:144.30px;width:80px;text-align:right;font:400 21.667px 'Liberation Mono', monospace;line-height:32.38px;color:#237893;white-space:pre;-webkit-text-stroke:0.1px #237893">1</div>
<div style="position:absolute;left:1575px;top:144.30px;font:400 21.667px 'Liberation Mono', monospace;line-height:32.38px;white-space:pre"><span style="color:#0000ff;-webkit-text-stroke:0.35px #0000ff">with</span></div>
<div style="position:absolute;left:1477.5px;top:176.68px;width:80px;text-align:right;font:400 21.667px 'Liberation Mono', monospace;line-height:32.38px;color:#237893;white-space:pre;-webkit-text-stroke:0.1px #237893">2</div>
<div style="position:absolute;left:1477.5px;top:209.06px;width:80px;text-align:right;font:400 21.667px 'Liberation Mono', monospace;line-height:32.38px;color:#237893;white-space:pre;-webkit-text-stroke:0.1px #237893">3</div>
<div style="position:absolute;left:1575px;top:209.06px;font:400 21.667px 'Liberation Mono', monospace;line-height:32.38px;white-space:pre"><span style="color:#000;-webkit-text-stroke:0.35px #000">source</span><span style="color:#000;-webkit-text-stroke:0.35px #000"> </span><span style="color:#0000ff;-webkit-text-stroke:0.35px #0000ff">as</span><span style="color:#000;-webkit-text-stroke:0.35px #000"> </span><span style="color:#0431fa;-webkit-text-stroke:0.35px #0431fa">(</span></div>
<div style="position:absolute;left:1477.5px;top:241.44px;width:80px;text-align:right;font:400 21.667px 'Liberation Mono', monospace;line-height:32.38px;color:#237893;white-space:pre;-webkit-text-stroke:0.1px #237893">4</div>
<div style="position:absolute;left:1477.5px;top:273.82px;width:80px;text-align:right;font:400 21.667px 'Liberation Mono', monospace;line-height:32.38px;color:#237893;white-space:pre;-webkit-text-stroke:0.1px #237893">5</div>
<svg style="position:absolute;left:1716.4px;top:280.02px;" width="16" height="16" viewBox="0 0 16 16" fill="none"><g stroke="#000" stroke-width="1.9" stroke-linecap="round"><path d="M8 2V14M2.8 5L13.2 11M13.2 5L2.8 11"/></g></svg>
<div style="position:absolute;left:1575px;top:273.82px;font:400 21.667px 'Liberation Mono', monospace;line-height:32.38px;white-space:pre"><span style="color:#000;-webkit-text-stroke:0.35px #000">    </span><span style="color:#0000ff;-webkit-text-stroke:0.35px #0000ff">select</span><span style="color:#000;-webkit-text-stroke:0.35px #000"> </span><span style="color:#000;-webkit-text-stroke:0.35px #000"> </span><span style="color:#000;-webkit-text-stroke:0.35px #000"> </span><span style="color:#0000ff;-webkit-text-stroke:0.35px #0000ff">from</span><span style="color:#000;-webkit-text-stroke:0.35px #000"> </span><span style="color:#319331;-webkit-text-stroke:0.35px #319331">{</span><span style="color:#7b3814;-webkit-text-stroke:0.35px #7b3814">{</span><span style="color:#000;-webkit-text-stroke:0.35px #000"> </span><span style="color:#000;-webkit-text-stroke:0.35px #000">source</span><span style="color:#0431fa;-webkit-text-stroke:0.35px #0431fa">(</span><span style="color:#a31515;-webkit-text-stroke:0.35px #a31515">&#x27;ecom&#x27;</span><span style="color:#000;-webkit-text-stroke:0.35px #000">,</span><span style="color:#000;-webkit-text-stroke:0.35px #000"> </span><span style="color:#a31515;-webkit-text-stroke:0.35px #a31515">&#x27;raw_items&#x27;</span><span style="color:#0431fa;-webkit-text-stroke:0.35px #0431fa">)</span><span style="color:#000;-webkit-text-stroke:0.35px #000"> </span><span style="color:#7b3814;-webkit-text-stroke:0.35px #7b3814">}</span><span style="color:#319331;-webkit-text-stroke:0.35px #319331">}</span></div>
<div style="position:absolute;left:1477.5px;top:306.20px;width:80px;text-align:right;font:400 21.667px 'Liberation Mono', monospace;line-height:32.38px;color:#237893;white-space:pre;-webkit-text-stroke:0.1px #237893">6</div>
<div style="position:absolute;left:1477.5px;top:338.58px;width:80px;text-align:right;font:400 21.667px 'Liberation Mono', monospace;line-height:32.38px;color:#237893;white-space:pre;-webkit-text-stroke:0.1px #237893">7</div>
<div style="position:absolute;left:1575px;top:338.58px;font:400 21.667px 'Liberation Mono', monospace;line-height:32.38px;white-space:pre"><span style="color:#0431fa;-webkit-text-stroke:0.35px #0431fa">)</span><span style="color:#000;-webkit-text-stroke:0.35px #000">,</span></div>
<div style="position:absolute;left:1477.5px;top:370.96px;width:80px;text-align:right;font:400 21.667px 'Liberation Mono', monospace;line-height:32.38px;color:#237893;white-space:pre;-webkit-text-stroke:0.1px #237893">8</div>
<div style="position:absolute;left:1477.5px;top:403.34px;width:80px;text-align:right;font:400 21.667px 'Liberation Mono', monospace;line-height:32.38px;color:#237893;white-space:pre;-webkit-text-stroke:0.1px #237893">9</div>
<div style="position:absolute;left:1575px;top:403.34px;font:400 21.667px 'Liberation Mono', monospace;line-height:32.38px;white-space:pre"><span style="color:#000;-webkit-text-stroke:0.35px #000">renamed</span><span style="color:#000;-webkit-text-stroke:0.35px #000"> </span><span style="color:#0000ff;-webkit-text-stroke:0.35px #0000ff">as</span><span style="color:#000;-webkit-text-stroke:0.35px #000"> </span><span style="color:#0431fa;-webkit-text-stroke:0.35px #0431fa">(</span></div>
<div style="position:absolute;left:1477.5px;top:435.72px;width:80px;text-align:right;font:400 21.667px 'Liberation Mono', monospace;line-height:32.38px;color:#237893;white-space:pre;-webkit-text-stroke:0.1px #237893">10</div>
<div style="position:absolute;left:1477.5px;top:468.10px;width:80px;text-align:right;font:400 21.667px 'Liberation Mono', monospace;line-height:32.38px;color:#237893;white-space:pre;-webkit-text-stroke:0.1px #237893">11</div>
<div style="position:absolute;left:1575px;top:468.10px;font:400 21.667px 'Liberation Mono', monospace;line-height:32.38px;white-space:pre"><span style="color:#000;-webkit-text-stroke:0.35px #000">    </span><span style="color:#0000ff;-webkit-text-stroke:0.35px #0000ff">select</span></div>
<div style="position:absolute;left:1477.5px;top:500.48px;width:80px;text-align:right;font:400 21.667px 'Liberation Mono', monospace;line-height:32.38px;color:#237893;white-space:pre;-webkit-text-stroke:0.1px #237893">12</div>
<div style="position:absolute;left:1477.5px;top:532.86px;width:80px;text-align:right;font:400 21.667px 'Liberation Mono', monospace;line-height:32.38px;color:#237893;white-space:pre;-webkit-text-stroke:0.1px #237893">13</div>
<div style="position:absolute;left:1680.2px;top:546.2600000000001px;width:10.8px;height:2.3px;background:#2a7f22"></div>
<div style="position:absolute;left:1693.2px;top:546.2600000000001px;width:10.8px;height:2.3px;background:#2a7f22"></div>
<div style="position:absolute;left:1706.2px;top:546.2600000000001px;width:10.8px;height:2.3px;background:#2a7f22"></div>
<div style="position:absolute;left:1719.2px;top:546.2600000000001px;width:10.8px;height:2.3px;background:#2a7f22"></div>
<div style="position:absolute;left:1732.2px;top:546.2600000000001px;width:10.8px;height:2.3px;background:#2a7f22"></div>
<div style="position:absolute;left:1745.2px;top:546.2600000000001px;width:10.8px;height:2.3px;background:#2a7f22"></div>
<div style="position:absolute;left:1758.2px;top:546.2600000000001px;width:10.8px;height:2.3px;background:#2a7f22"></div>
<div style="position:absolute;left:1771.2px;top:546.2600000000001px;width:10.8px;height:2.3px;background:#2a7f22"></div>
<div style="position:absolute;left:1784.2px;top:546.2600000000001px;width:10.8px;height:2.3px;background:#2a7f22"></div>
<div style="position:absolute;left:1797.2px;top:546.2600000000001px;width:10.8px;height:2.3px;background:#2a7f22"></div>
<div style="position:absolute;left:1575px;top:532.86px;font:400 21.667px 'Liberation Mono', monospace;line-height:32.38px;white-space:pre"><span style="color:#000;-webkit-text-stroke:0.35px #000">        </span><span style="color:#008000">            ids</span></div>
<div style="position:absolute;left:1477.5px;top:565.24px;width:80px;text-align:right;font:400 21.667px 'Liberation Mono', monospace;line-height:32.38px;color:#237893;white-space:pre;-webkit-text-stroke:0.1px #237893">14</div>
<div style="position:absolute;left:1575px;top:565.24px;font:400 21.667px 'Liberation Mono', monospace;line-height:32.38px;white-space:pre"><span style="color:#000;-webkit-text-stroke:0.35px #000">&lt;&lt;&lt;&lt;&lt;&lt;&lt; HEAD</span></div>
<div style="position:absolute;left:1477.5px;top:597.62px;width:80px;text-align:right;font:400 21.667px 'Liberation Mono', monospace;line-height:32.38px;color:#237893;white-space:pre;-webkit-text-stroke:0.1px #237893">15</div>
<div style="position:absolute;left:1575px;top:597.62px;font:400 21.667px 'Liberation Mono', monospace;line-height:32.38px;white-space:pre"><span style="color:#000;-webkit-text-stroke:0.35px #000">        </span><span style="color:#000;-webkit-text-stroke:0.35px #000">id</span><span style="color:#000;-webkit-text-stroke:0.35px #000"> </span><span style="color:#0000ff;-webkit-text-stroke:0.35px #0000ff">as</span><span style="color:#000;-webkit-text-stroke:0.35px #000"> </span><span style="color:#000;-webkit-text-stroke:0.35px #000">order_item</span><span style="color:#000;-webkit-text-stroke:0.35px #000">,</span></div>
<div style="position:absolute;left:1477.5px;top:630.00px;width:80px;text-align:right;font:400 21.667px 'Liberation Mono', monospace;line-height:32.38px;color:#237893;white-space:pre;-webkit-text-stroke:0.1px #237893">16</div>
<div style="position:absolute;left:1575px;top:630.00px;font:400 21.667px 'Liberation Mono', monospace;line-height:32.38px;white-space:pre"><span style="color:#000;-webkit-text-stroke:0.35px #000">=======</span></div>
<div style="position:absolute;left:1477.5px;top:662.38px;width:80px;text-align:right;font:400 21.667px 'Liberation Mono', monospace;line-height:32.38px;color:#237893;white-space:pre;-webkit-text-stroke:0.1px #237893">17</div>
<div style="position:absolute;left:1575px;top:662.38px;font:400 21.667px 'Liberation Mono', monospace;line-height:32.38px;white-space:pre"><span style="color:#000;-webkit-text-stroke:0.35px #000">        </span><span style="color:#000;-webkit-text-stroke:0.35px #000">id</span><span style="color:#000;-webkit-text-stroke:0.35px #000"> </span><span style="color:#0000ff;-webkit-text-stroke:0.35px #0000ff">as</span><span style="color:#000;-webkit-text-stroke:0.35px #000"> </span><span style="color:#000;-webkit-text-stroke:0.35px #000">item_id</span><span style="color:#000;-webkit-text-stroke:0.35px #000">,</span></div>
<div style="position:absolute;left:1477.5px;top:694.76px;width:80px;text-align:right;font:400 21.667px 'Liberation Mono', monospace;line-height:32.38px;color:#237893;white-space:pre;-webkit-text-stroke:0.1px #237893">18</div>
<div style="position:absolute;left:1575px;top:694.76px;font:400 21.667px 'Liberation Mono', monospace;line-height:32.38px;white-space:pre"><span style="color:#000;-webkit-text-stroke:0.35px #000">&gt;&gt;&gt;&gt;&gt;&gt;&gt; 58c1dd23d5eebd9cd2495fa7124ab61b599afa74</span></div>
<div style="position:absolute;left:1477.5px;top:727.14px;width:80px;text-align:right;font:400 21.667px 'Liberation Mono', monospace;line-height:32.38px;color:#237893;white-space:pre;-webkit-text-stroke:0.1px #237893">19</div>
<div style="position:absolute;left:1575px;top:727.14px;font:400 21.667px 'Liberation Mono', monospace;line-height:32.38px;white-space:pre"><span style="color:#000;-webkit-text-stroke:0.35px #000">        </span><span style="color:#000;-webkit-text-stroke:0.35px #000">order_id</span><span style="color:#000;-webkit-text-stroke:0.35px #000">,</span></div>
<div style="position:absolute;left:1477.5px;top:759.52px;width:80px;text-align:right;font:400 21.667px 'Liberation Mono', monospace;line-height:32.38px;color:#237893;white-space:pre;-webkit-text-stroke:0.1px #237893">20</div>
<div style="position:absolute;left:1575px;top:759.52px;font:400 21.667px 'Liberation Mono', monospace;line-height:32.38px;white-space:pre"><span style="color:#000;-webkit-text-stroke:0.35px #000">        </span><span style="color:#000;-webkit-text-stroke:0.35px #000">sku</span><span style="color:#000;-webkit-text-stroke:0.35px #000"> </span><span style="color:#0000ff;-webkit-text-stroke:0.35px #0000ff">as</span><span style="color:#000;-webkit-text-stroke:0.35px #000"> </span><span style="color:#000;-webkit-text-stroke:0.35px #000">product_id</span></div>
<div style="position:absolute;left:1477.5px;top:791.90px;width:80px;text-align:right;font:400 21.667px 'Liberation Mono', monospace;line-height:32.38px;color:#0b216f;white-space:pre;-webkit-text-stroke:0.1px #0b216f">21</div>
<div style="position:absolute;left:1477.5px;top:824.28px;width:80px;text-align:right;font:400 21.667px 'Liberation Mono', monospace;line-height:32.38px;color:#237893;white-space:pre;-webkit-text-stroke:0.1px #237893">22</div>
<div style="position:absolute;left:1575px;top:824.28px;font:400 21.667px 'Liberation Mono', monospace;line-height:32.38px;white-space:pre"><span style="color:#000;-webkit-text-stroke:0.35px #000">    </span><span style="color:#0000ff;-webkit-text-stroke:0.35px #0000ff">from</span><span style="color:#000;-webkit-text-stroke:0.35px #000"> </span><span style="color:#000;-webkit-text-stroke:0.35px #000">source</span></div>
<div style="position:absolute;left:1477.5px;top:856.66px;width:80px;text-align:right;font:400 21.667px 'Liberation Mono', monospace;line-height:32.38px;color:#237893;white-space:pre;-webkit-text-stroke:0.1px #237893">23</div>
<div style="position:absolute;left:1477.5px;top:889.04px;width:80px;text-align:right;font:400 21.667px 'Liberation Mono', monospace;line-height:32.38px;color:#237893;white-space:pre;-webkit-text-stroke:0.1px #237893">24</div>
<div style="position:absolute;left:1575px;top:889.04px;font:400 21.667px 'Liberation Mono', monospace;line-height:32.38px;white-space:pre"><span style="color:#0431fa;-webkit-text-stroke:0.35px #0431fa">)</span></div>
<div style="position:absolute;left:1477.5px;top:921.42px;width:80px;text-align:right;font:400 21.667px 'Liberation Mono', monospace;line-height:32.38px;color:#237893;white-space:pre;-webkit-text-stroke:0.1px #237893">25</div>
<div style="position:absolute;left:1477.5px;top:953.80px;width:80px;text-align:right;font:400 21.667px 'Liberation Mono', monospace;line-height:32.38px;color:#237893;white-space:pre;-webkit-text-stroke:0.1px #237893">26</div>
<svg style="position:absolute;left:1664.4px;top:960.0px;" width="16" height="16" viewBox="0 0 16 16" fill="none"><g stroke="#000" stroke-width="1.9" stroke-linecap="round"><path d="M8 2V14M2.8 5L13.2 11M13.2 5L2.8 11"/></g></svg>
<div style="position:absolute;left:1575px;top:953.80px;font:400 21.667px 'Liberation Mono', monospace;line-height:32.38px;white-space:pre"><span style="color:#0000ff;-webkit-text-stroke:0.35px #0000ff">select</span><span style="color:#000;-webkit-text-stroke:0.35px #000"> </span><span style="color:#000;-webkit-text-stroke:0.35px #000"> </span><span style="color:#000;-webkit-text-stroke:0.35px #000"> </span><span style="color:#0000ff;-webkit-text-stroke:0.35px #0000ff">from</span><span style="color:#000;-webkit-text-stroke:0.35px #000"> </span><span style="color:#000;-webkit-text-stroke:0.35px #000">renamed</span></div>
<div style="position:absolute;left:1477.5px;top:986.18px;width:80px;text-align:right;font:400 21.667px 'Liberation Mono', monospace;line-height:32.38px;color:#237893;white-space:pre;-webkit-text-stroke:0.1px #237893">27</div>
<div style="position:absolute;left:1575px;top:790.1px;width:3px;height:32.4px;background:#000"></div>
<div style="position:absolute;left:2333px;top:142.3px;width:4px;height:1.5px;background:#0000ff;opacity:0.6"></div>
<div style="position:absolute;left:2333px;top:146.3px;width:6px;height:1.5px;background:#222;opacity:0.6"></div>
<div style="position:absolute;left:2340px;top:146.3px;width:2px;height:1.5px;background:#0000ff;opacity:0.6"></div>
<div style="position:absolute;left:2343px;top:146.3px;width:1px;height:1.5px;background:#0431fa;opacity:0.6"></div>
<div style="position:absolute;left:2337px;top:150.3px;width:6px;height:1.5px;background:#0000ff;opacity:0.6"></div>
<div style="position:absolute;left:2344px;top:150.3px;width:1px;height:1.5px;background:#222;opacity:0.6"></div>
<div style="position:absolute;left:2346px;top:150.3px;width:4px;height:1.5px;background:#0000ff;opacity:0.6"></div>
<div style="position:absolute;left:2351px;top:150.3px;width:1px;height:1.5px;background:#319331;opacity:0.6"></div>
<div style="position:absolute;left:2352px;top:150.3px;width:1px;height:1.5px;background:#7b3814;opacity:0.6"></div>
<div style="position:absolute;left:2354px;top:150.3px;width:6px;height:1.5px;background:#222;opacity:0.6"></div>
<div style="position:absolute;left:2360px;top:150.3px;width:1px;height:1.5px;background:#0431fa;opacity:0.6"></div>
<div style="position:absolute;left:2361px;top:150.3px;width:6px;height:1.5px;background:#a31515;opacity:0.6"></div>
<div style="position:absolute;left:2367px;top:150.3px;width:1px;height:1.5px;background:#222;opacity:0.6"></div>
<div style="position:absolute;left:2369px;top:150.3px;width:11px;height:1.5px;background:#a31515;opacity:0.6"></div>
<div style="position:absolute;left:2380px;top:150.3px;width:1px;height:1.5px;background:#0431fa;opacity:0.6"></div>
<div style="position:absolute;left:2382px;top:150.3px;width:1px;height:1.5px;background:#7b3814;opacity:0.6"></div>
<div style="position:absolute;left:2383px;top:150.3px;width:1px;height:1.5px;background:#319331;opacity:0.6"></div>
<div style="position:absolute;left:2333px;top:154.3px;width:1px;height:1.5px;background:#0431fa;opacity:0.6"></div>
<div style="position:absolute;left:2334px;top:154.3px;width:1px;height:1.5px;background:#222;opacity:0.6"></div>
<div style="position:absolute;left:2333px;top:158.3px;width:7px;height:1.5px;background:#222;opacity:0.6"></div>
<div style="position:absolute;left:2341px;top:158.3px;width:2px;height:1.5px;background:#0000ff;opacity:0.6"></div>
<div style="position:absolute;left:2344px;top:158.3px;width:1px;height:1.5px;background:#0431fa;opacity:0.6"></div>
<div style="position:absolute;left:2337px;top:162.3px;width:6px;height:1.5px;background:#0000ff;opacity:0.6"></div>
<div style="position:absolute;left:2341px;top:166.3px;width:15px;height:1.5px;background:#008000;opacity:0.6"></div>
<div style="position:absolute;left:2333px;top:168.3px;width:7px;height:1.5px;background:#aaaaaa;opacity:0.6"></div>
<div style="position:absolute;left:2341px;top:168.3px;width:4px;height:1.5px;background:#222;opacity:0.6"></div>
<div style="position:absolute;left:2341px;top:170.3px;width:2px;height:1.5px;background:#222;opacity:0.6"></div>
<div style="position:absolute;left:2344px;top:170.3px;width:2px;height:1.5px;background:#0000ff;opacity:0.6"></div>
<div style="position:absolute;left:2347px;top:170.3px;width:10px;height:1.5px;background:#222;opacity:0.6"></div>
<div style="position:absolute;left:2357px;top:170.3px;width:1px;height:1.5px;background:#222;opacity:0.6"></div>
<div style="position:absolute;left:2333px;top:172.3px;width:7px;height:1.5px;background:#aaaaaa;opacity:0.6"></div>
<div style="position:absolute;left:2341px;top:174.3px;width:2px;height:1.5px;background:#222;opacity:0.6"></div>
<div style="position:absolute;left:2344px;top:174.3px;width:2px;height:1.5px;background:#0000ff;opacity:0.6"></div>
<div style="position:absolute;left:2347px;top:174.3px;width:7px;height:1.5px;background:#222;opacity:0.6"></div>
<div style="position:absolute;left:2354px;top:174.3px;width:1px;height:1.5px;background:#222;opacity:0.6"></div>
<div style="position:absolute;left:2333px;top:176.3px;width:7px;height:1.5px;background:#aaaaaa;opacity:0.6"></div>
<div style="position:absolute;left:2341px;top:176.3px;width:40px;height:1.5px;background:#222;opacity:0.6"></div>
<div style="position:absolute;left:2341px;top:178.3px;width:8px;height:1.5px;background:#222;opacity:0.6"></div>
<div style="position:absolute;left:2349px;top:178.3px;width:1px;height:1.5px;background:#222;opacity:0.6"></div>
<div style="position:absolute;left:2341px;top:180.3px;width:3px;height:1.5px;background:#222;opacity:0.6"></div>
<div style="position:absolute;left:2345px;top:180.3px;width:2px;height:1.5px;background:#0000ff;opacity:0.6"></div>
<div style="position:absolute;left:2348px;top:180.3px;width:10px;height:1.5px;background:#222;opacity:0.6"></div>
<div style="position:absolute;left:2337px;top:184.3px;width:4px;height:1.5px;background:#0000ff;opacity:0.6"></div>
<div style="position:absolute;left:2342px;top:184.3px;width:6px;height:1.5px;background:#222;opacity:0.6"></div>
<div style="position:absolute;left:2333px;top:188.3px;width:1px;height:1.5px;background:#0431fa;opacity:0.6"></div>
<div style="position:absolute;left:2333px;top:192.3px;width:6px;height:1.5px;background:#0000ff;opacity:0.6"></div>
<div style="position:absolute;left:2340px;top:192.3px;width:1px;height:1.5px;background:#222;opacity:0.6"></div>
<div style="position:absolute;left:2342px;top:192.3px;width:4px;height:1.5px;background:#0000ff;opacity:0.6"></div>
<div style="position:absolute;left:2347px;top:192.3px;width:7px;height:1.5px;background:#222;opacity:0.6"></div>
<div style="position:absolute;left:2397px;top:142px;width:25px;height:466px;background:#c1c1c1"></div>
<div style="position:absolute;left:2423px;top:142px;width:53px;height:467px;background:#c1c1c1"></div>
<div style="position:absolute;left:2398px;top:475.5px;width:23px;height:2px;background:#595959"></div>
<div style="position:absolute;left:2397px;top:608px;width:1px;height:436px;background:#ececec"></div>
<div style="position:absolute;left:2313px;top:59.5px;width:149.5px;height:97px;border:5.8px solid #e8412a"></div>
<div style="position:absolute;left:1453.5px;top:554.5px;width:808px;height:175px;border:5.8px solid #e8412a"></div>
<div style="position:absolute;left:497px;top:1046px;width:1979px;height:2px;background:#e6e6e6"></div>
<div style="position:absolute;left:497px;top:1131.5px;width:1979px;height:1.5px;background:#e6e4e4"></div>
<div style="position:absolute;left:1015px;top:1048px;width:1.5px;height:84px;background:#e6e4e4"></div>
<div style="position:absolute;left:518px;top:1060.5px;width:158px;height:55.5px;background:#fff;border:1.5px solid #8c8685;border-radius:12px"></div>
<svg style="position:absolute;left:532px;top:1074px;" width="29" height="29" viewBox="0 0 29 29" fill="none"><g stroke="#151515" stroke-width="1.8" fill="none"><rect x="2" y="2.2" width="25" height="24.6" rx="3"/><path d="M2 13.6H27M2 19.9H27M14.3 8V26.8"/></g><rect x="2" y="2.2" width="25" height="6" rx="2.5" fill="#151515"/></svg>
<div style="position:absolute;left:573.50px;top:1071.35px;font:400 23.8px 'Liberation Sans', sans-serif;line-height:36px;color:#151515;letter-spacing:0.2px;white-space:pre;-webkit-text-stroke:0.65px #151515">Preview</div>
<div style="position:absolute;left:691px;top:1060.5px;width:162px;height:55.5px;background:#fff;border:1.5px solid #8c8685;border-radius:12px"></div>
<svg style="position:absolute;left:703px;top:1077px;" width="32" height="22" viewBox="0 0 32 22" fill="none"><g stroke="#151515" stroke-width="1.8" fill="none"><path d="M9 5L3.5 11L9 17"/><path d="M23 5L28.5 11L23 17"/><path d="M18 2.5L14 19.5"/></g></svg>
<div style="position:absolute;left:745.50px;top:1071.35px;font:400 23.8px 'Liberation Sans', sans-serif;line-height:36px;color:#151515;letter-spacing:0.75px;white-space:pre;-webkit-text-stroke:0.65px #151515">Compile</div>
<div style="position:absolute;left:867px;top:1060.5px;width:127px;height:55.5px;background:#fff;border:1.5px solid #8c8685;border-radius:12px"></div>
<div style="position:absolute;left:938px;top:1061px;width:1.5px;height:54.5px;background:#8c8685"></div>
<div style="position:absolute;left:882.00px;top:1071.35px;font:400 23.8px 'Liberation Sans', sans-serif;line-height:36px;color:#151515;letter-spacing:0.87px;white-space:pre;-webkit-text-stroke:0.65px #151515">Lint</div>
<svg style="position:absolute;left:955px;top:1080px;" width="20" height="16" viewBox="0 0 20 16" fill="none"><path d="M3.5 4.5L10 11L16.5 4.5" stroke="#333" stroke-width="1.6" fill="none"/></svg>
<div style="position:absolute;left:1073.20px;top:1071.98px;font:400 24px 'Liberation Sans', sans-serif;line-height:36px;color:#151515;letter-spacing:0.1px;white-space:pre;-webkit-text-stroke:0.2px #151515">Results</div>
<div style="position:absolute;left:1211.40px;top:1071.98px;font:400 24px 'Liberation Sans', sans-serif;line-height:36px;color:#151515;letter-spacing:0.27px;white-space:pre;-webkit-text-stroke:0.2px #151515">Compiled code</div>
<div style="position:absolute;left:1183px;top:1129px;width:221px;height:3px;background:#8a8482"></div>
<div style="position:absolute;left:2224px;top:1060px;width:232px;height:57.5px;background:#fff;border:1.5px solid #8c8685;border-radius:12px"></div>
<svg style="position:absolute;left:2234px;top:1072px;" width="34" height="32" viewBox="0 0 34 32" fill="none"><defs><linearGradient id="cg" gradientUnits="userSpaceOnUse" x1="5" y1="0" x2="28" y2="0"><stop offset="0.42" stop-color="#e8621e"/><stop offset="0.62" stop-color="#a04a80"/><stop offset="0.85" stop-color="#5b2ae6"/></linearGradient></defs><g stroke="url(#cg)" stroke-width="1.9" fill="none" stroke-linecap="round" stroke-linejoin="round"><path d="M16.3 10.6L10.8 7.3Q7 5.6 5.8 8.6Q5.6 10.6 7.4 13Q9.6 16.3 7.6 19.8Q5.3 23.4 5.9 25.2Q7.2 27.4 10 25.8L16.2 22.4"/><path d="M16.3 10.6L24 6.6Q27.2 5.5 27.6 8.8Q27.3 11.6 25 14.2Q22.8 16.5 24.8 20.2Q27.6 23.4 27.2 25.2Q25.4 27.6 22.4 25.6L20.2 24"/><path d="M16.2 11.5Q12.3 13.5 12.4 16.5Q12.5 19.8 16.2 21.2Q19.6 20 20.6 16.6Q20.9 14.5 19.6 13.2"/></g><path d="M16.5 14.3L17.2 15.7L18.6 16.3L17.2 16.9L16.5 18.3L15.8 16.9L14.4 16.3L15.8 15.7Z" fill="#e8621e"/></svg>
<div style="position:absolute;left:2277.00px;top:1072.61px;font:400 24.2px 'Liberation Sans', sans-serif;line-height:36px;color:#151515;letter-spacing:0.72px;white-space:pre;-webkit-text-stroke:0.6px #151515">dbt Copilot</div>
<svg style="position:absolute;left:2418px;top:1080px;" width="20" height="16" viewBox="0 0 20 16" fill="none"><path d="M3.5 4.5L10 11L16.5 4.5" stroke="#222" stroke-width="1.7" fill="none"/></svg>
<svg style="position:absolute;left:1452px;top:1190px;" width="68" height="46" viewBox="0 0 68 46" fill="none"><g stroke="#6b6562" stroke-width="4.2" fill="none" stroke-linecap="butt"><path d="M20 13L8 24L20 35"/><path d="M48 13L60 24L48 35"/><path d="M37.5 6L31 41"/></g></svg>
<div style="position:absolute;left:1344.50px;top:1269.15px;font:400 29px 'Liberation Sans', sans-serif;line-height:44px;color:#4a4544;letter-spacing:0.7px;white-space:pre;-webkit-text-stroke:0.8px #4a4544">There&#x27;s nothing here.</div>
<div style="position:absolute;left:1037.60px;top:1317.51px;font:400 24.8px 'Liberation Sans', sans-serif;line-height:37px;color:#6f6a68;letter-spacing:0.58px;white-space:pre;-webkit-text-stroke:0.15px #6f6a68">Press Compile above to preview the SQL dbt will run against your warehouse.</div>
<div style="position:absolute;left:0px;top:1405.8px;width:2476px;height:72.2px;background:linear-gradient(#fdfdfd, #fbfbfb 35%, #efefef 70%, #e3e3e3);border-top:1.2px solid #e2e0e0"></div>
<svg style="position:absolute;left:24px;top:1432px;" width="24" height="20" viewBox="0 0 24 20" fill="none"><path d="M4 14L12 6L20 14" stroke="#3d3d3d" stroke-width="1.8" fill="none"/></svg>
<div style="position:absolute;left:71px;top:1406.5px;width:1.5px;height:72px;background:#e6e4e4"></div>
<div style="position:absolute;left:78.5px;top:1411px;width:1691px;height:80px;border:1px solid #f1f1f1;border-radius:12px;background:transparent"></div>
<div style="position:absolute;left:100.00px;top:1424.51px;font:400 24.8px 'Liberation Sans', sans-serif;line-height:37px;color:#6b6664;letter-spacing:0.2px;white-space:pre;-webkit-text-stroke:0.15px #6b6664">dbt build --select &lt;model_name&gt;</div>
<div style="position:absolute;left:1791px;top:1424px;width:72px;height:36px;background:#5b3aeb;border-radius:18px"></div>
<div style="position:absolute;left:1831px;top:1429px;width:25px;height:25px;background:#fff;border-radius:50%"></div>
<svg style="position:absolute;left:1802px;top:1433px;" width="22" height="18" viewBox="0 0 22 18" fill="none"><path d="M3 9L8 14L18 4" stroke="#fff" stroke-width="1.8" fill="none"/></svg>
<div style="position:absolute;left:1884.00px;top:1423.71px;font:400 24.8px 'Liberation Sans', sans-serif;line-height:37px;color:#4a4544;letter-spacing:1.18px;white-space:pre;-webkit-text-stroke:0.7px #4a4544">Defer to staging/production</div>
<svg style="position:absolute;left:2218px;top:1427.3px;" width="25" height="25" viewBox="0 0 25 25" fill="none"><g stroke="#6b6562" stroke-width="1.5" fill="none"><circle cx="12.5" cy="12" r="9.6"/><path d="M9.3 9.5Q9.3 6.5 12.5 6.5Q15.7 6.5 15.7 9.3Q15.7 11.3 12.5 12.3V14.3"/></g><circle cx="12.5" cy="17" r="1.1" fill="#6b6562"/></svg>
<div style="position:absolute;left:2263px;top:1421px;width:127px;height:43px;background:linear-gradient(#c6f8cc,#bdf0c3);border-radius:11px"></div>
<svg style="position:absolute;left:2272px;top:1428px;" width="29" height="29" viewBox="0 0 29 29" fill="none"><circle cx="14.5" cy="14.5" r="11.8" stroke="#151515" stroke-width="1.8" fill="none"/></svg>
<div style="position:absolute;left:2309.00px;top:1424.41px;font:400 24.8px 'Liberation Sans', sans-serif;line-height:37px;color:#151515;letter-spacing:-0.65px;white-space:pre;-webkit-text-stroke:0.7px #151515">Ready</div>
<div style="position:absolute;left:2404px;top:1415px;width:60px;height:55px;background:#fdfdfd;border:1.5px solid #8c8685;border-radius:12px"></div>
<div style="position:absolute;left:2421.4px;top:1439.5px;width:5.2px;height:5.2px;background:#151515;border-radius:50%"></div>
<div style="position:absolute;left:2430.4px;top:1439.5px;width:5.2px;height:5.2px;background:#151515;border-radius:50%"></div>
<div style="position:absolute;left:2439.4px;top:1439.5px;width:5.2px;height:5.2px;background:#151515;border-radius:50%"></div>
<svg style="position:absolute;left:2436px;top:1438px;" width="40" height="40" viewBox="0 0 40 40" fill="none"><path d="M19 40A21 11.5 0 0 0 40 28.5V40Z" fill="#000"/></svg>
</body></html>
